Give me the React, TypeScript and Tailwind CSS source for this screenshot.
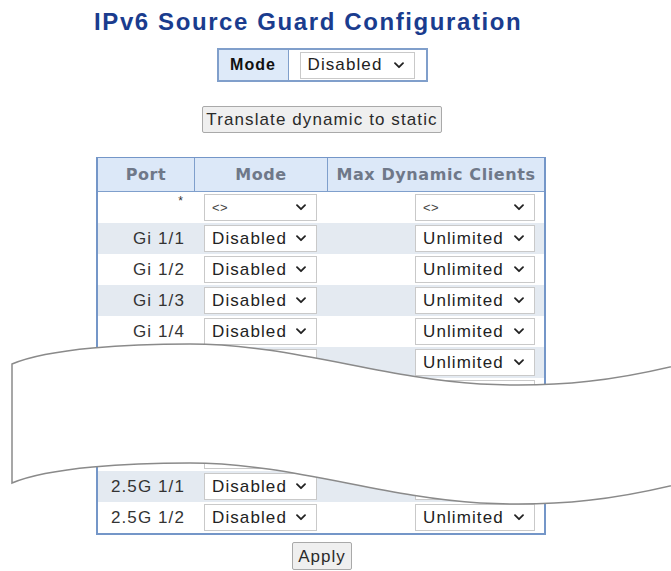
import React from 'react';

const Chevron = () => (
    <svg width="10" height="7" viewBox="0 0 10 7" className="shrink-0">
        <path d="M1 1.2 L5 5.2 L9 1.2" fill="none" stroke="#222" strokeWidth="1.8" strokeLinecap="round" strokeLinejoin="round" />
    </svg>
);

interface FakeSelectProps {
    value: string;
    className?: string;
    small?: boolean;
}

const FakeSelect: React.FC<FakeSelectProps> = ({ value, className, small }) => (
    <div className={`h-[27px] bg-white border border-[#c9c9c9] flex items-center justify-between pl-[7px] pr-[10px] ${className ?? ''}`}>
        {small ? (
            <span className="text-[13px] text-[#444] tracking-[0.5px]">{value}</span>
        ) : (
            <span className="text-[17px] text-[#222] tracking-[1.1px]">{value}</span>
        )}
        <Chevron />
    </div>
);

const ports = ['Gi 1/1', 'Gi 1/2', 'Gi 1/3', 'Gi 1/4', 'Gi 1/5', 'Gi 1/6', 'Gi 1/7', 'Gi 1/8', '2.5G 1/1', '2.5G 1/2'];

export default function App() {
    return (
        <div className="relative w-[671px] h-[571px] overflow-hidden bg-white font-['Liberation_Sans',Arial,sans-serif]">
            <div className="w-[450px] ml-[96px] pt-[8px] flex flex-col items-center">
                {/* Title */}
                <h1 className="self-start -ml-[2px] text-[24px] leading-[28px] font-bold text-[#1a3c8e] tracking-[1.6px] whitespace-nowrap">
                    IPv6 Source Guard Configuration
                </h1>

                {/* Global mode */}
                <div className="mt-[12px] ml-[2px] flex border-2 border-[#809fcb] h-[34px]">
                    <div className="w-[70px] bg-[#deeaf9] border-r border-[#809fcb] flex items-center justify-center text-[16px] font-bold text-[#111] tracking-[1px]">
                        Mode
                    </div>
                    <div className="flex items-center px-[11px]">
                        <FakeSelect value="Disabled" className="w-[115px] h-[26px]" />
                    </div>
                </div>

                <button className="mt-[24px] ml-[2px] h-[27px] px-[3px] bg-[#efefef] border border-[#a9a9a9] rounded-[2px] text-[17px] leading-none text-[#2a2a2a] tracking-[1.1px] whitespace-nowrap">
                    Translate dynamic to static
                </button>

                {/* Port table */}
                <div className="mt-[24px] w-[450px] border-2 border-[#7496c8] border-t">
                    <div className="flex h-[34px] bg-[#dce8f8] border-b border-[#7f9fcc] font-['DejaVu_Sans',Verdana,sans-serif] font-bold text-[16px] text-[#6f7889] tracking-[0.6px]">
                        <div className="w-[97px] border-r border-[#7f9fcc] flex items-center justify-center">Port</div>
                        <div className="w-[133px] border-r border-[#7f9fcc] flex items-center justify-center">Mode</div>
                        <div className="flex-1 flex items-center justify-center whitespace-nowrap">Max Dynamic Clients</div>
                    </div>

                    <div className="flex h-[31px] bg-white">
                        <div className="w-[98px] flex justify-end pr-[13px] pt-[3px] text-[12px] text-[#333] leading-none">*</div>
                        <div className="w-[133px] flex items-center pl-[8px]">
                            <FakeSelect value="<>" small className="w-[113px]" />
                        </div>
                        <div className="flex-1 flex items-center justify-end pr-[9px]">
                            <FakeSelect value="<>" small className="w-[120px]" />
                        </div>
                    </div>

                    {ports.map((port, i) => (
                        <div key={port} className={`flex h-[31px] ${i % 2 === 0 ? 'bg-[#e4eaf1]' : 'bg-white'}`}>
                            <div className="w-[98px] flex items-center justify-end pr-[11px] text-[17px] text-[#333] tracking-[1.1px] whitespace-nowrap">
                                {port}
                            </div>
                            <div className="w-[133px] flex items-center pl-[8px]">
                                <FakeSelect value="Disabled" className="w-[113px]" />
                            </div>
                            <div className="flex-1 flex items-center justify-end pr-[9px]">
                                <FakeSelect value="Unlimited" className="w-[120px]" />
                            </div>
                        </div>
                    ))}
                </div>

                <button className="mt-[7px] ml-[2px] h-[28px] px-[5px] bg-[#efefef] border border-[#a9a9a9] rounded-[2px] text-[17px] leading-none text-[#2a2a2a] tracking-[1px]">
                    Apply
                </button>
            </div>

            {/* Torn-out section marker */}
            <svg className="absolute left-0 top-0 pointer-events-none" width="671" height="571" viewBox="0 0 671 571">
                <path
                    d="M12 364 C50 348, 130 344, 190 344 C290 344, 380 378, 480 384 C560 388, 620 380, 690 362 L690 481 C620 499, 560 507, 480 503 C380 497, 290 463, 190 463 C130 463, 50 467, 12 483 Z"
                    fill="#ffffff"
                    stroke="#8a8a8a"
                    strokeWidth="1.5"
                />
            </svg>
        </div>
    );
}
